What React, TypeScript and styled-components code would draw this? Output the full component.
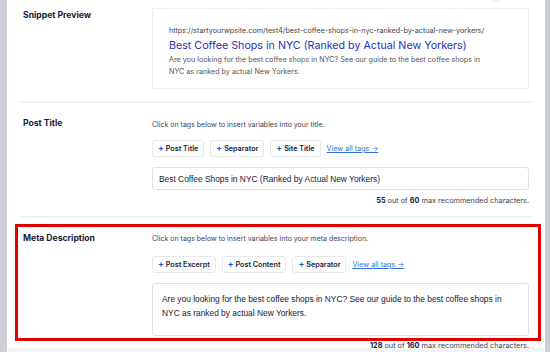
import React from "react";
import styled, { createGlobalStyle } from "styled-components";

const Global = createGlobalStyle`
  html, body { margin: 0; padding: 0; background: #fff; }
  body { font-family: Inter, "Noto Sans", sans-serif; color: #141b38; }
  * { box-sizing: border-box; }
`;

const Page = styled.div`
  display: flex;
  width: 550px;
  height: 352px;
  overflow: hidden;
  background: #fff;
`;

const Strip = styled.div<{ $w: number }>`
  width: ${(p) => p.$w}px;
  flex: none;
  background: #cdd1d6;
`;

const Main = styled.div`
  flex: 1;
  position: relative;
  padding: 0 12px;
  display: flex;
  flex-direction: column;
`;

const TopKnob = styled.div`
  position: absolute;
  left: 481px;
  top: -14px;
  width: 16px;
  height: 16px;
  border-radius: 50%;
  border: 1px solid #e2e4e8;
  background: #fff;
`;

const Section = styled.section<{ $pt: number; $pb: number; $last?: boolean }>`
  display: grid;
  grid-template-columns: 129px 1fr;
  padding: ${(p) => p.$pt}px 4px ${(p) => p.$pb}px 4px;
  border-bottom: ${(p) => (p.$last ? "none" : "2px solid #f1f2f4")};
  position: relative;
`;

const Label = styled.div<{ $mt: number }>`
  font-size: 8.6px;
  font-weight: 700;
  margin-top: ${(p) => p.$mt}px;
  line-height: 12px;
`;

const Field = styled.div`
  display: flex;
  flex-direction: column;
`;

const PreviewBox = styled.div`
  border: 1px solid #eceef1;
  border-radius: 2px;
  height: 81px;
  padding: 16px 16px 0 16px;
`;

const Url = styled.div`
  font-size: 7.2px;
  color: #444;
  line-height: 11px;
`;

const SnipTitle = styled.div`
  font-size: 10.7px;
  color: #2a2fb5;
  line-height: 15px;
  margin-top: 2px;
`;

const SnipDesc = styled.div`
  font-size: 7.2px;
  color: #555;
  line-height: 12px;
  margin-top: 1px;
`;

const Hint = styled.div<{ $mt: number }>`
  font-size: 7px;
  color: #3c4254;
  line-height: 10px;
  margin-top: ${(p) => p.$mt}px;
`;

const TagRow = styled.div<{ $mt: number }>`
  display: flex;
  align-items: center;
  gap: 6px;
  margin-top: ${(p) => p.$mt}px;
`;

const Tag = styled.div`
  height: 17px;
  padding: 0 5px;
  border: 1px solid #e6e8ec;
  border-radius: 3px;
  font-size: 7.2px;
  font-weight: 600;
  display: flex;
  align-items: center;
  gap: 2px;
  white-space: nowrap;
`;

const Plus = styled.span`
  color: #005ae0;
  font-weight: 700;
  font-size: 8.5px;
  line-height: 1;
`;

const TagsLink = styled.a`
  font-size: 7.2px;
  color: #2f6fe0;
  text-decoration: underline;
  white-space: nowrap;
`;

const InputBox = styled.div<{ $h: number; $pad: string; $mt: number }>`
  height: ${(p) => p.$h}px;
  margin-top: ${(p) => p.$mt}px;
  border: 1px solid #dfe1e5;
  border-radius: 3px;
  padding: ${(p) => p.$pad};
  font-family: "Liberation Sans", Arial, sans-serif;
  font-size: 8.4px;
  color: #141b38;
  line-height: 14px;
`;

const Count = styled.div<{ $mt: number }>`
  text-align: right;
  font-size: 7.3px;
  color: #3c4254;
  margin-top: ${(p) => p.$mt}px;
  line-height: 10px;
  position: relative;
  z-index: 2;
  b { font-weight: 700; color: #141b38; }
`;

const Highlight = styled.div`
  position: absolute;
  left: -4px;
  right: -8px;
  top: 6px;
  height: 117px;
  border: 3px solid #e00000;
  pointer-events: none;
`;

const BottomStrip = styled.div`
  position: absolute;
  left: 0;
  right: 0;
  bottom: 0;
  height: 4px;
  background: #f3f4f6;
`;

const tags1 = ["Post Title", "Separator", "Site Title"];
const tags2 = ["Post Excerpt", "Post Content", "Separator"];

function Tags({ items, mt }: { items: string[]; mt: number }) {
  return (
    <TagRow $mt={mt}>
      {items.map((t) => (
        <Tag key={t}>
          <Plus>+</Plus> {t}
        </Tag>
      ))}
      <TagsLink>View all tags →</TagsLink>
    </TagRow>
  );
}

export default function App() {
  return (
    <>
      <Global />
      <Page>
        <Strip $w={7} />
        <Main>
          <TopKnob />
          <Section $pt={8} $pb={12}>
            <Label $mt={1}>Snippet Preview</Label>
            <PreviewBox>
              <Url>https://startyourwpsite.com/test4/best-coffee-shops-in-nyc-ranked-by-actual-new-yorkers/</Url>
              <SnipTitle>Best Coffee Shops in NYC (Ranked by Actual New Yorkers)</SnipTitle>
              <SnipDesc>
                Are you looking for the best coffee shops in NYC? See our guide to the best coffee shops in
                <br />
                NYC as ranked by actual New Yorkers.
              </SnipDesc>
            </PreviewBox>
          </Section>
          <Section $pt={14} $pb={10}>
            <Label $mt={0}>Post Title</Label>
            <Field>
              <Hint $mt={3}>Click on tags below to insert variables into your title.</Hint>
              <Tags items={tags1} mt={10} />
              <InputBox $h={23} $pad="4px 6px" $mt={10}>
                Best Coffee Shops in NYC (Ranked by Actual New Yorkers)
              </InputBox>
              <Count $mt={6}>
                <b>55</b> out of <b>60</b> max recommended characters.
              </Count>
            </Field>
          </Section>
          <Section $pt={14} $pb={0} $last>
            <Highlight />
            <Label $mt={0}>Meta Description</Label>
            <Field>
              <Hint $mt={2}>Click on tags below to insert variables into your meta description.</Hint>
              <Tags items={tags2} mt={12} />
              <InputBox $h={53} $pad="8px 9px" $mt={10}>
                Are you looking for the best coffee shops in NYC? See our guide to the best coffee shops in
                <br />
                NYC as ranked by actual New Yorkers.
              </InputBox>
              <Count $mt={5}>
                <b>128</b> out of <b>160</b> max recommended characters.
              </Count>
            </Field>
          </Section>
          <BottomStrip />
        </Main>
        <Strip $w={5} />
      </Page>
    </>
  );
}
